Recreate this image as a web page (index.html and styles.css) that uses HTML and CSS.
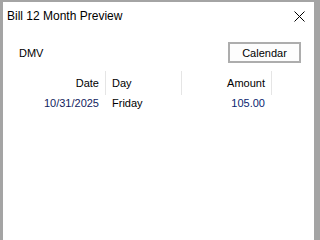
FILE: index.html
```html
<!DOCTYPE html>
<html>
<head>
<meta charset="utf-8">
<link rel="stylesheet" href="styles.css">
</head>
<body>
<div class="window">
  <div class="titlebar">
    <span class="title">Bill 12 Month Preview</span>
    <span class="close">
      <svg width="11" height="11" viewBox="0 0 11 11"><path d="M0.5 0.5 L10.5 10.5 M10.5 0.5 L0.5 10.5" stroke="#000" stroke-width="1" fill="none"/></svg>
    </span>
  </div>
  <div class="content">
    <div class="toprow">
      <span class="name">DMV</span>
      <button class="btn">Calendar</button>
    </div>
    <div class="list">
      <div class="row header">
        <div class="cell c-date">Date</div>
        <div class="cell c-day">Day</div>
        <div class="cell c-amt">Amount</div>
      </div>
      <div class="row data">
        <div class="cell c-date date-val">10/31/2025</div>
        <div class="cell c-day">Friday</div>
        <div class="cell c-amt amt-val">105.00</div>
      </div>
    </div>
  </div>
</div>
</body>
</html>
```

FILE: styles.css
```css
html, body {
  margin: 0;
  padding: 0;
  background: #a4a4a4;
  overflow: hidden;
}
.window {
  margin: 2px 0 0 3px;
  width: 311px;
  height: calc(100vh - 2px);
  min-height: 233px;
  background: #fff;
  font-family: "Liberation Sans", Arial, sans-serif;
  color: #000;
}
.titlebar {
  height: 28px;
  display: flex;
  align-items: center;
  justify-content: space-between;
  padding-left: 4px;
}
.title {
  font-size: 12px;
}
.close {
  width: 30px;
  height: 28px;
  display: flex;
  align-items: center;
  justify-content: center;
}
.content {
  padding: 12px 13px 0 16px;
  font-size: 11px;
}
.toprow {
  display: flex;
  align-items: center;
  justify-content: space-between;
  height: 21px;
}
.btn {
  width: 73px;
  height: 21px;
  margin: 0;
  padding: 0;
  border: 2px solid #adadad;
  background: #fdfdfd;
  font-family: "Liberation Sans", Arial, sans-serif;
  font-size: 11px;
  color: #000;
}
.list {
  margin-top: 8px;
}
.row {
  display: flex;
}
.header {
  height: 24px;
  align-items: center;
}
.header .cell {
  height: 24px;
  line-height: 24px;
  border-right: 1px solid #e5e5e5;
}
.data {
  height: 16px;
  line-height: 16px;
}
.data .cell {
  border-right: 1px solid transparent;
}
.cell {
  box-sizing: border-box;
  white-space: nowrap;
}
.c-date {
  width: 87px;
  text-align: right;
  padding-right: 6px;
}
.c-day {
  width: 76px;
  padding-left: 6px;
}
.c-amt {
  width: 90px;
  text-align: right;
  padding-right: 6px;
}
.date-val {
  color: #121c5e;
}
.amt-val {
  color: #0a2570;
}
```
